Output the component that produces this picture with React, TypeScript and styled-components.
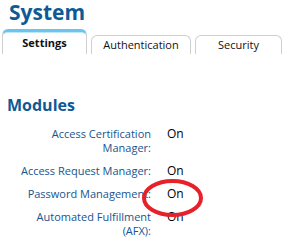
import React from "react";
import styled, { createGlobalStyle } from "styled-components";

const GlobalStyle = createGlobalStyle`
  html, body {
    margin: 0;
    padding: 0;
    background: #ffffff;
    font-family: "Open Sans", "DejaVu Sans", sans-serif;
  }
`;

const Page = styled.div`
  position: relative;
  width: 283px;
  height: 247px;
  overflow: hidden;
`;

const Title = styled.h1`
  margin: 0;
  padding: 0 0 0 9px;
  height: 29px;
  font-size: 21px;
  line-height: 24px;
  font-weight: 700;
  color: #0e5a94;
`;

const TabBar = styled.div`
  display: flex;
  align-items: flex-end;
  gap: 4px;
  padding-left: 2px;
  height: 25px;
`;

const Tab = styled.div<{ $active?: boolean; $width: number }>`
  box-sizing: border-box;
  width: ${({ $width }) => $width}px;
  height: ${({ $active }) => ($active ? 25 : 19)}px;
  display: flex;
  align-items: center;
  justify-content: center;
  padding-bottom: 1px;
  border: 1px solid #cfcfcf;
  border-bottom: none;
  border-radius: 6px 6px 0 0;
  font-size: 11px;
  color: #111111;
  font-weight: ${({ $active }) => ($active ? 700 : 400)};
  ${({ $active }) =>
    $active &&
    `
    border-top: 3px solid #6cc3ee;
    box-shadow: inset 0 1px 0 #bfe6f8;
  `}
`;

const Content = styled.div`
  padding: 42px 0 0 7px;
`;

const SectionTitle = styled.h2`
  margin: 0 0 13px;
  font-size: 16px;
  line-height: 18px;
  font-weight: 700;
  color: #0e5a94;
`;

const ModuleList = styled.div`
  display: grid;
  grid-template-columns: 134px auto;
  column-gap: 16px;
  row-gap: 9px;
  padding-left: 10px;
`;

const Label = styled.div`
  text-align: right;
  font-size: 11px;
  line-height: 14px;
  color: #17548f;
`;

const Value = styled.div`
  font-size: 12px;
  line-height: 14px;
  color: #000000;
`;

const Highlight = styled.svg`
  position: absolute;
  left: 140px;
  top: 177px;
  pointer-events: none;
`;

const modules = [
  { name: "Access Certification Manager:", status: "On" },
  { name: "Access Request Manager:", status: "On" },
  { name: "Password Management:", status: "On" },
  { name: "Automated Fulfillment (AFX):", status: "On" },
];

export default function App() {
  return (
    <Page>
      <GlobalStyle />
      <Title>System</Title>
      <TabBar>
        <Tab $active $width={85}>Settings</Tab>
        <Tab $width={100}>Authentication</Tab>
        <Tab $width={87}>Security</Tab>
      </TabBar>
      <Content>
        <SectionTitle>Modules</SectionTitle>
        <ModuleList>
          {modules.map((m) => (
            <React.Fragment key={m.name}>
              <Label>{m.name}</Label>
              <Value>{m.status}</Value>
            </React.Fragment>
          ))}
        </ModuleList>
      </Content>
      <Highlight width="66" height="42" viewBox="0 0 66 42">
        <ellipse cx="32.5" cy="21" rx="28.5" ry="17" fill="none" stroke="#e8202a" strokeWidth="4" />
      </Highlight>
    </Page>
  );
}
